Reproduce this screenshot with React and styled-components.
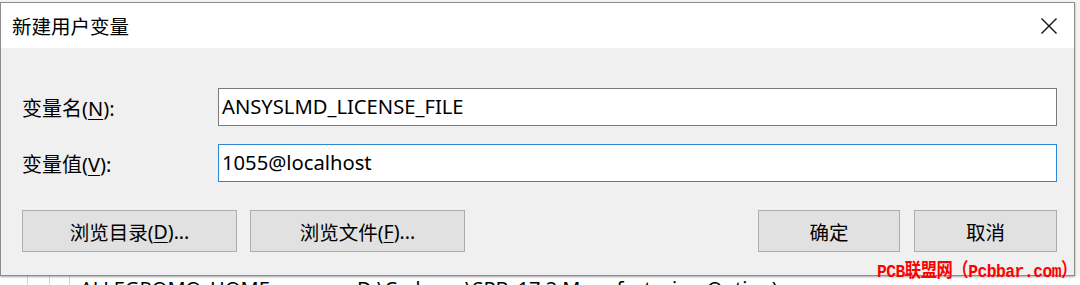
import React from 'react';
import styled, { createGlobalStyle } from 'styled-components';

const GlobalStyle = createGlobalStyle`
  html, body {
    margin: 0;
    padding: 0;
    background: #ffffff;
  }
  body {
    font-family: "Noto Sans", "Noto Sans CJK SC", sans-serif;
  }
`

const Page = styled.div`
  position: relative;
  width: 1080px;
  height: 285px;
  overflow: hidden;
  background: #f4f4f4;
  display: flex;
  flex-direction: column;
  padding-top: 2px;
  box-sizing: border-box;
`

const Dialog = styled.div`
  width: 1075px;
  height: 274px;
  flex: none;
  box-sizing: border-box;
  border: 1px solid #8c8c8c;
  display: flex;
  flex-direction: column;
  background: #f0f0f0;
  box-shadow: 0 1px 2px rgba(0, 0, 0, 0.35);
  position: relative;
  z-index: 1;
`

const TitleBar = styled.div`
  height: 45px;
  flex: none;
  background: #ffffff;
  display: flex;
  align-items: center;
  justify-content: space-between;
  padding: 0 16px 0 11px;
`

const Title = styled.span`
  font-family: "Noto Sans CJK SC", sans-serif;
  font-size: 19.5px;
  color: #000;
`

const CloseButton = styled.div`
  width: 18px;
  height: 18px;
  display: flex;
  margin-top: 1px;
`

const Body = styled.div`
  flex: 1;
  display: flex;
  flex-direction: column;
  padding: 40px 17px 0 21px;
`

const Fields = styled.div`
  display: grid;
  grid-template-columns: 196px 1fr;
  row-gap: 18px;
  align-items: center;
`

const Label = styled.label`
  font-family: "Noto Sans", "Noto Sans CJK SC", sans-serif;
  font-size: 20px;
  color: #000;
  u {
    text-underline-offset: 3px;
    text-decoration-thickness: 1px;
  }
`

const Field = styled.div`
  height: 38px;
  box-sizing: border-box;
  background: #ffffff;
  border: 1px solid ${p => (p.focused ? '#2f86d0' : '#7a7a7a')};
  padding: 0 3px;
  display: flex;
  align-items: center;
  font-family: "Noto Sans", sans-serif;
  font-size: 20.2px;
  color: #000;
  white-space: nowrap;
  padding-bottom: 2px;
`

const ButtonRow = styled.div`
  display: flex;
  justify-content: space-between;
  margin-top: 28px;
`

const ButtonGroup = styled.div`
  display: flex;
  gap: ${p => p.gap}px;
`

const Button = styled.div`
  width: ${p => p.w}px;
  height: 42px;
  box-sizing: border-box;
  background: #e1e1e1;
  border: 1px solid #adadad;
  display: flex;
  align-items: center;
  justify-content: center;
  font-family: "Noto Sans", "Noto Sans CJK SC", sans-serif;
  font-size: 19.5px;
  color: #000;
  u {
    text-underline-offset: 3px;
    text-decoration-thickness: 1px;
  }
`

const BackList = styled.div`
  height: 20px;
  flex: none;
  background: #ffffff;
  display: flex;
  align-items: flex-start;
  font-family: "Noto Sans", sans-serif;
  font-size: 20px;
  color: #000;
  line-height: 20px;
`

const Cell = styled.div`
  width: ${p => p.w}px;
  flex: none;
  height: 100%;
  box-sizing: border-box;
  border-right: ${p => (p.line ? '1px solid #d6d6d6' : 'none')};
  padding-left: ${p => p.pad || 0}px;
  padding-top: 3px;
  white-space: nowrap;
`

const Watermark = styled.div`
  position: absolute;
  left: 877px;
  top: 255px;
  z-index: 2;
  color: #ff0000;
  font-family: "Liberation Mono", "Noto Sans CJK SC", monospace;
  font-weight: bold;
  font-size: 19px;
  letter-spacing: -0.6px;
  white-space: nowrap;
  transform: scaleX(0.86);
  transform-origin: left top;
`

function CloseIcon() {
  return (
    <svg width="18" height="18" viewBox="0 0 18 18">
      <path d="M1.5 1.5 L16.5 16.5 M16.5 1.5 L1.5 16.5" stroke="#111" strokeWidth="1.4" fill="none" />
    </svg>
  )
}

export default function App() {
  return (
    <Page>
      <GlobalStyle />
      <Dialog>
        <TitleBar>
          <Title>新建用户变量</Title>
          <CloseButton>
            <CloseIcon />
          </CloseButton>
        </TitleBar>
        <Body>
          <Fields>
            <Label>变量名(<u>N</u>):</Label>
            <Field>ANSYSLMD_LICENSE_FILE</Field>
            <Label>变量值(<u>V</u>):</Label>
            <Field focused>1055@localhost</Field>
          </Fields>
          <ButtonRow>
            <ButtonGroup gap={13}>
              <Button w={215}>浏览目录(<u>D</u>)...</Button>
              <Button w={215}>浏览文件(<u>F</u>)...</Button>
            </ButtonGroup>
            <ButtonGroup gap={14}>
              <Button w={142}>确定</Button>
              <Button w={143}>取消</Button>
            </ButtonGroup>
          </ButtonRow>
        </Body>
      </Dialog>
      <BackList>
        <Cell w={28} line />
        <Cell w={22} line />
        <Cell w={20} line />
        <Cell w={287} pad={10}>ALLEGROMO_HOME</Cell>
        <Cell w={600}>D:\Cadence\SPB_17.2 Manufacturing Option)</Cell>
      </BackList>
      <Watermark>PCB联盟网（Pcbbar.com）</Watermark>
    </Page>
  )
}
